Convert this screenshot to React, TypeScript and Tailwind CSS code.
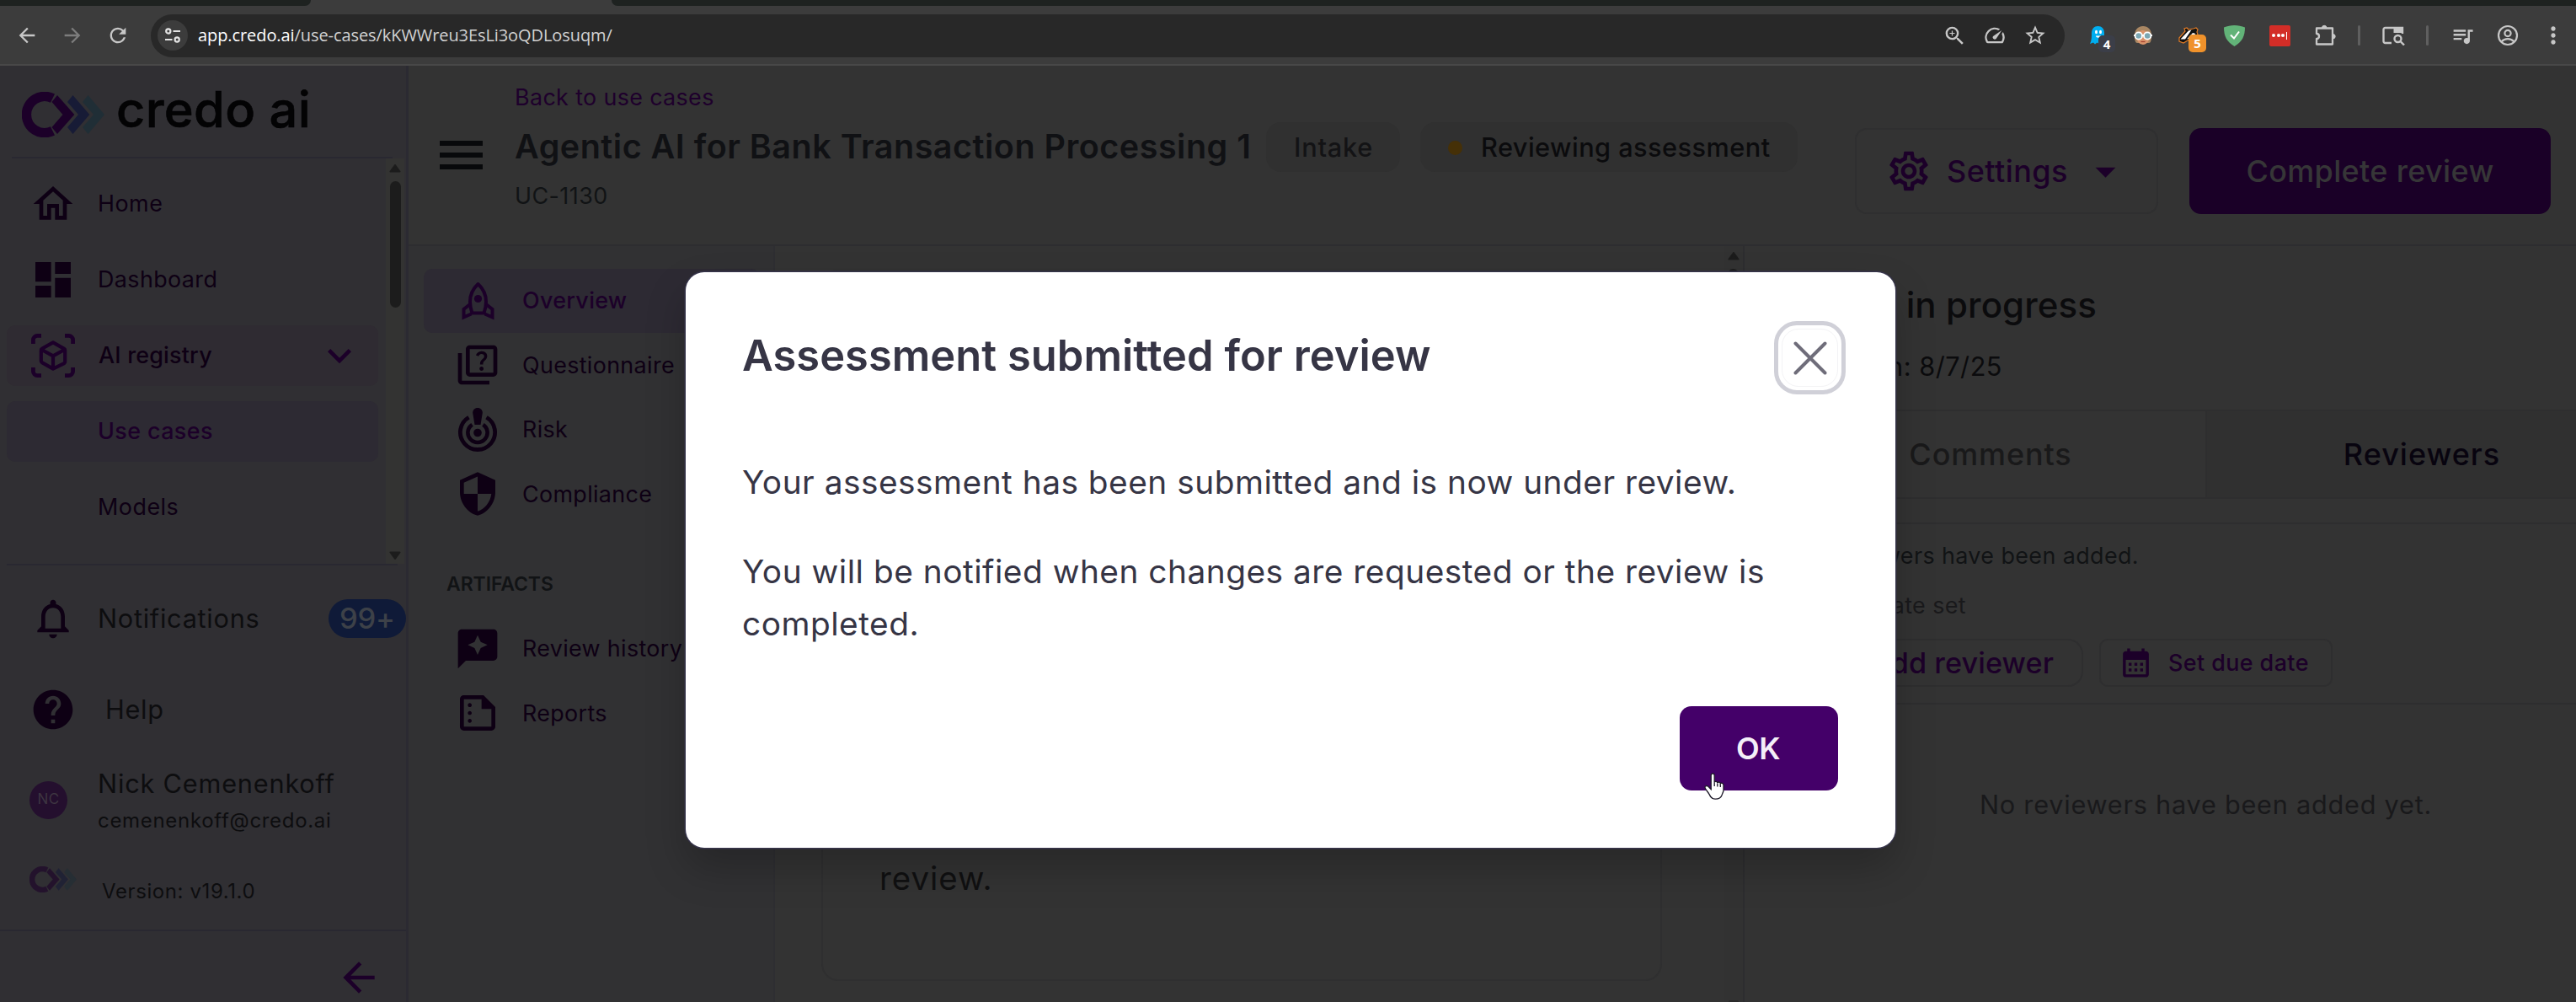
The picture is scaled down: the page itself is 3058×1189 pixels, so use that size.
import type { ReactNode } from "react";
import {
  MdArrowBack,
  MdArrowDropDown,
  MdArrowForward,
  MdCalendarMonth,
  MdDashboard,
  MdExpandMore,
  MdHelp,
  MdMoreVert,
  MdNotificationsNone,
  MdOutlineHome,
  MdOutlineQuiz,
  MdOutlineSettings,
  MdOutlineSummarize,
  MdQueueMusic,
  MdRefresh,
  MdSecurity,
  MdSpeed,
  MdStarBorder,
  MdZoomIn,
} from "react-icons/md";

/* ---------- drawings ---------- */

function CredoMark({ className }: { className: string }) {
  return (
    <svg viewBox="0 0 98 54" className={className}>
      <path d="M36.5 7.6A21.6 21.6 0 1 0 36.5 46.4" fill="none" stroke="#1c0029" strokeWidth="11.4" />
      <path d="M42 4L62.3 27L42 50L35.5 42L48.5 27L35.5 12Z" fill="#1c0029" />
      <path d="M60.5 4L80.3 27L60.5 50L54 42L67 27L54 12Z" fill="#171b36" />
      <path d="M78.5 4L98 27L78.5 50L72 42L85 27L72 12Z" fill="#202e36" />
    </svg>
  );
}

function ScanBox() {
  return (
    <svg viewBox="0 0 26 26" className="size-[52px]" fill="none" stroke="#1c0029">
      <path
        d="M1.2 6V3.7A2.5 2.5 0 0 1 3.7 1.2H6M20 1.2h2.3a2.5 2.5 0 0 1 2.5 2.5V6M24.8 20v2.3a2.5 2.5 0 0 1-2.5 2.5H20M6 24.8H3.7a2.5 2.5 0 0 1-2.5-2.5V20"
        strokeWidth="2.4"
      />
      <path
        d="M13 5.2l6.6 3.7a1 1 0 0 1 .5.9v6.9a1 1 0 0 1-.5.9L13 20.8l-6.6-3.7a1 1 0 0 1-.5-.9V9.8a1 1 0 0 1 .5-.9L13 5.2zM6.3 9.5L13 13.2L19.7 9.5M13 13v7.5"
        strokeWidth="2.1"
        strokeLinejoin="round"
      />
    </svg>
  );
}

function Rocket() {
  return (
    <svg viewBox="0 0 39 46" className="h-[46px] w-[39px]" fill="none" stroke="#1c0029" strokeWidth="4">
      <path d="M19.5 3C13 9 10 17 10 24c0 5 1 9.5 2.5 13.5h14C28 33.5 29 29 29 24c0-7-3-15-9.5-21z" strokeLinejoin="round" />
      <path d="M10 27L2.5 33V42.5L11.5 38.5M29 27L36.5 33V42.5L27.5 38.5" />
      <circle cx="19.5" cy="20.5" r="4.6" fill="#1c0029" stroke="none" />
    </svg>
  );
}

function RiskTarget() {
  return (
    <svg viewBox="0 0 48 54" className="h-[54px] w-[48px]" fill="none" stroke="#0e0014">
      <path d="M13.5 12.2A20.6 20.6 0 1 0 34.5 12.2" strokeWidth="4.8" />
      <path d="M17.5 20.8A11.6 11.6 0 1 0 30.5 20.8" strokeWidth="4.6" />
      <circle cx="24" cy="30.5" r="4.8" fill="#0e0014" stroke="none" />
      <path d="M24 1c3.4 0 6 2.6 5.8 6L27.5 21h-7L18.2 7C18 3.6 20.6 1 24 1z" fill="#0e0014" stroke="none" />
    </svg>
  );
}

function ReviewBubble() {
  return (
    <svg viewBox="0 0 24 24" className="size-[56px]" fill="#0e0014">
      <path
        fillRule="evenodd"
        d="M20 2H4c-1.1 0-2 .9-2 2v18l4-4h14c1.1 0 2-.9 2-2V4c0-1.1-.9-2-2-2zM13.57 11.57L12 15l-1.57-3.43L7 10l3.43-1.57L12 5l1.57 3.43L17 10z"
      />
    </svg>
  );
}

function HandCursor() {
  return (
    <svg viewBox="0 0 25 32" className="h-8 w-[25px]">
      <path
        d="M8.2 3.2c0-3 4-3 4 0v8.3c.4-1.6 3.4-1.4 3.6.6.5-1.4 3.2-1.2 3.5.8.7-1.2 3.4-.9 3.7 1.4v6.5c0 2-1.4 3.8-1.8 5.4-1.6 4.4-5.2 5-7.7 5-4 0-6.4-3-7.4-5.6C4.5 22.5 1.5 20 .9 17.2c0-2.2 3.3-2.2 4.7-.2l2.6 2.6z"
        fill="#fff"
        stroke="#1b1726"
        strokeWidth="1.3"
      />
      <path d="M12.2 11.5v4.5M15.8 12.5v4M19.3 13.5v3.5" stroke="#1b1726" strokeWidth="1.3" />
    </svg>
  );
}

/* ---------- browser chrome ---------- */

function Slot({ children }: { children: ReactNode }) {
  return <div className="relative flex w-[54px] shrink-0 items-center justify-center">{children}</div>;
}

function BrowserChrome() {
  return (
    <div className="h-[78px] border-b-2 border-[#484848] bg-[#3c3c3c] font-['Open_Sans',sans-serif]">
      <div className="flex h-[7px] bg-[#3c3c3c]">
        <div className="w-[369px] rounded-br-[10px] bg-[#1e2220]" />
        <div className="w-[357px]" />
        <div className="grow rounded-bl-[10px] bg-[#1e2220]" />
      </div>
      <div className="flex h-[70px] items-center text-[#c7c7c7]">
        <MdArrowBack className="ml-[18px] size-[28px]" />
        <MdArrowForward className="ml-[26px] size-[28px] text-[#7d7d7d]" />
        <MdRefresh className="ml-[26px] size-[28px]" />
        <div className="ml-[25px] flex h-[51px] w-[2272px] items-center rounded-full bg-[#282828] pr-[11px] pl-[8px]">
          <div className="flex size-[36px] items-center justify-center rounded-full bg-[#3c3c3c]">
            <svg viewBox="0 0 20 20" className="size-5" fill="none" stroke="#e3e3e3" strokeWidth="2.2">
              <circle cx="4.8" cy="5" r="2.6" />
              <path d="M10.5 5H19M1 15h8.5" />
              <circle cx="15.2" cy="15" r="2.6" />
            </svg>
          </div>
          <div className="ml-[12px] text-[20px] tracking-[-0.08px] text-[#d2d2d2]">
            <span className="text-white">app.credo.ai</span>/use-cases/kKWWreu3EsLi3oQDLosuqm/
          </div>
          <div className="ml-auto flex">
            <div className="flex w-12 justify-center"><MdZoomIn className="size-[29px]" /></div>
            <div className="flex w-12 justify-center"><MdSpeed className="size-[28px]" /></div>
            <div className="flex w-12 justify-center"><MdStarBorder className="size-[28px]" /></div>
          </div>
        </div>
        <div className="ml-[12px] flex items-center">
          <Slot>
            <svg viewBox="0 0 18 22" className="h-[22px] w-[18px]">
              <path d="M2 9C2 3 5 0 9.5 0S17 3 17 8v13l-3-1.5-2.5 2-3-2-2.5 2-2-2L0 21c2-4 2-8 2-12z" fill="#00aef0" />
              <ellipse cx="7.5" cy="7" rx="1.5" ry="2.3" fill="#fff" />
              <ellipse cx="12.5" cy="7" rx="1.5" ry="2.3" fill="#fff" />
              <path d="M7 11.5h6c0 3-6 3-6 0z" fill="#fff" />
            </svg>
            <span className="absolute top-[11px] left-[28px] flex h-5 w-5 items-center justify-center rounded-[5px] bg-[#3b3e48] text-[15px] leading-none font-bold text-white">4</span>
          </Slot>
          <Slot>
            <svg viewBox="0 0 24 22" className="h-[22px] w-6">
              <path d="M2 11C2 4 6 0 12 0s10 4 10 11c0 6-1 9-3 9H5c-2 0-3-3-3-9z" fill="#a98763" />
              <path d="M4 11c1-3 5-6 8-6s7 3 8 6c0 7-4 11-8 11S4 18 4 11z" fill="#d9936b" />
              <path d="M1 11h22" stroke="#fff" strokeWidth="2" />
              <circle cx="6.8" cy="11.5" r="4.2" fill="#7ba7b3" stroke="#fff" strokeWidth="1.8" />
              <circle cx="17.2" cy="11.5" r="4.2" fill="#7ba7b3" stroke="#fff" strokeWidth="1.8" />
              <path d="M9.5 18.5h5" stroke="#a33f2e" strokeWidth="1.2" />
            </svg>
          </Slot>
          <Slot>
            <svg viewBox="0 0 25 20" className="h-5 w-[25px]">
              <path d="M1 13L8 5l-1-3 3-1 2 2 6-1 3-1 2 2-1 3 1 3-6 3-6 4-5 3-5-2z" fill="#111" stroke="#e07b26" strokeWidth="1.2" />
              <path d="M2.500 14.500L12 4.500l3.500-1-7.500 11zM10 14.500L17 7l3.500 1-6.500 5z" fill="#fff" />
            </svg>
            <span className="absolute top-[9px] left-[27px] flex h-[21px] w-[21px] items-center justify-center rounded-[5px] bg-[#f0922b] text-[15px] leading-none font-bold text-white">5</span>
          </Slot>
          <Slot>
            <svg viewBox="0 0 25 25" className="size-[25px]">
              <path d="M12.5 0C17 0 21 1 25 2.5c0 10-3 17-12.5 22.500C3 19.500 0 12.500 0 2.500 4 1 8 0 12.500 0z" fill="#62b378" />
              <path d="M8 11.5l4 4 6-8" fill="none" stroke="#fff" strokeWidth="2" />
            </svg>
          </Slot>
          <Slot>
            <div className="flex size-[25px] items-center justify-center gap-[1.5px] rounded-[2px] bg-[#d32d27]">
              <i className="size-1 rounded-full bg-white" />
              <i className="size-1 rounded-full bg-white" />
              <i className="size-1 rounded-full bg-white" />
              <i className="h-[9px] w-px bg-white" />
            </div>
          </Slot>
          <Slot>
            <svg viewBox="0 0 25 26" className="h-[26px] w-[25px]" fill="none" stroke="#c7c7c7" strokeWidth="2.3">
              <path d="M2 4.5h19v19H2v-6.5c4 0 4-6 0-6z" strokeLinejoin="round" />
              <path d="M8.5 4a2.7 2.7 0 0 1 5.4 0zM21.5 11.5a2.7 2.7 0 0 1 0 5.4z" fill="#c7c7c7" strokeWidth="1" />
            </svg>
          </Slot>
        </div>
        <div className="ml-[12px] h-6 w-[3px] rounded-full bg-[#5f5f5f]" />
        <div className="flex w-[78px] justify-center">
          <svg viewBox="0 0 27 23" className="h-[23px] w-[27px]" fill="none" stroke="#c7c7c7" strokeWidth="2.4">
            <path d="M11 20H3.5A2 2 0 0 1 1.5 18V4a2 2 0 0 1 2-2H24v7" />
            <path d="M13.5 1H23a2 2 0 0 1 2 2v5H13.5z" fill="#c7c7c7" stroke="none" />
            <circle cx="18.5" cy="15" r="4" />
            <path d="M21.5 18l4.5 4.5" />
          </svg>
        </div>
        <div className="h-6 w-[3px] rounded-full bg-[#5f5f5f]" />
        <div className="ml-[13px] flex">
          <Slot><MdQueueMusic className="size-[29px]" /></Slot>
          <Slot>
            <svg viewBox="0 0 26 26" className="size-[26px]" fill="none" stroke="#c7c7c7" strokeWidth="2.2">
              <circle cx="13" cy="13" r="11" />
              <circle cx="13" cy="10.5" r="3.6" />
              <path d="M5.5 20.5c4-4.5 11-4.5 15 0" />
            </svg>
          </Slot>
          <Slot><MdMoreVert className="size-[32px]" /></Slot>
        </div>
      </div>
    </div>
  );
}

/* ---------- left sidebar ---------- */

function Arrow({ down }: { down?: boolean }) {
  return (
    <svg viewBox="0 0 14 10" className="h-[10px] w-[14px]" fill="#1c1c1c" stroke="#1c1c1c" strokeWidth="2" strokeLinejoin="round">
      {down ? <path d="M1.5 1.5h11L7 9z" /> : <path d="M1.5 8.5h11L7 1z" />}
    </svg>
  );
}

function Sidebar() {
  return (
    <aside className="flex w-[485px] shrink-0 flex-col border-r-[3px] border-[#2b2a32] bg-[#302f33] text-[#0e0014]">
      <div className="flex h-[108px] items-start pl-[26px]">
        <CredoMark className="mt-[31px] h-[54px] w-[98px]" />
        <span className="ml-[14px] pt-[19px] text-[59.5px] leading-[64px] font-medium tracking-[0.3px] whitespace-nowrap text-[#030304] [-webkit-text-stroke:0.6px_#030304]">
          credo ai
        </span>
      </div>
      <div className="ml-[14px] h-[2px] w-[452px] bg-[#292831]" />
      <div className="flex h-[481px]">
        <nav className="flex w-[458px] flex-col gap-[18px] pt-[18px] pl-[8px] text-[26.9px] tracking-[0.5px]">
          <div className="flex h-[72px] w-[441px] items-center pl-[27px]">
            <MdOutlineHome className="size-[56px]" />
            <span className="ml-[25px] pb-[1px]">Home</span>
          </div>
          <div className="flex h-[72px] w-[441px] items-center pl-[27px]">
            <MdDashboard className="size-[56px]" />
            <span className="ml-[25px] pb-[1px] tracking-[0.4px]">Dashboard</span>
          </div>
          <div className="flex h-[72px] w-[441px] items-center rounded-[10px] bg-[#2f2b32] pl-[29px]">
            <ScanBox />
            <span className="ml-[28px] pb-[1px] font-medium tracking-[0.2px]">AI registry</span>
            <MdExpandMore className="mr-[18px] ml-auto size-[56px] text-[#1c0029]" />
          </div>
          <div className="flex h-[72px] w-[441px] items-center rounded-[10px] bg-[#2d2a33] pl-[108px] font-medium tracking-[0.4px] text-[#1c0029]">
            <span className="pb-[1px]">Use cases</span>
          </div>
          <div className="flex h-[72px] w-[441px] items-center pl-[108px]">
            <span className="pb-[1px]">Models</span>
          </div>
        </nav>
        <div className="flex w-[22px] flex-col items-center bg-[#333332] pt-[7px] pb-[5px]">
          <Arrow />
          <div className="mt-[10px] h-[150px] w-[13px] rounded-full bg-[#1c1c1c]" />
          <div className="mt-auto"><Arrow down /></div>
        </div>
      </div>
      <div className="ml-[8px] h-[2px] w-[464px] bg-[#292831]" />
      <div className="flex h-[126px] items-center pl-[35px]">
        <MdNotificationsNone className="size-[56px]" />
        <span className="ml-[25px] text-[30.7px] tracking-[0.72px] text-[#0d0d0f]">Notifications</span>
        <span className="ml-auto flex h-[46px] w-[92px] shrink-0 items-center justify-center rounded-full bg-[#0f1a38] text-[34.5px] leading-none font-medium tracking-[-0.2px] text-[#3d4148]">
          99+
        </span>
      </div>
      <div className="flex h-[90px] items-center pl-[35px]">
        <MdHelp className="size-[56px]" />
        <span className="ml-[34px] text-[30.7px] tracking-[0.7px] text-[#0d0d0f]">Help</span>
      </div>
      <div className="flex h-[124px] items-center pl-[35px]">
        <div className="flex size-[45px] items-center justify-center rounded-full bg-[#240f2e] text-[17px] tracking-[0.5px] text-[#3d3541]">NC</div>
        <div className="ml-[36px] flex flex-col pt-[4px] text-[#0d0d0f]">
          <span className="h-[45px] text-[30.7px] leading-[45px] tracking-[0.8px]">Nick Cemenenkoff</span>
          <span className="h-[43px] text-[24px] leading-[43px] tracking-[0.69px]">cemenenkoff@credo.ai</span>
        </div>
      </div>
      <div className="flex h-[92px] items-start pl-[35px]">
        <CredoMark className="mt-[17px] h-[31px] w-[56px] opacity-60" />
        <span className="ml-[30px] pt-[32px] text-[24px] leading-[30px] tracking-[0.6px] text-[#0d0d0f]">Version: v19.1.0</span>
      </div>
      <div className="h-[2px] bg-[#292831]" />
      <div className="flex grow items-start justify-end pt-[27px] pr-[28px]">
        <MdArrowBack className="size-[56px] text-[#1c0029]" />
      </div>
    </aside>
  );
}

/* ---------- use-case page ---------- */

function PageHeader() {
  return (
    <header className="flex h-[214px] shrink-0 border-b-2 border-[#2d2d30]">
      <div className="mt-[89px] ml-[37px] flex w-[51px] flex-col gap-[8.5px]">
        <div className="h-[5.5px] bg-[#08090b]" />
        <div className="h-[5.5px] bg-[#08090b]" />
        <div className="h-[5.5px] bg-[#08090b]" />
      </div>
      <div className="ml-[38px] pt-[17px] whitespace-nowrap">
        <div className="h-[40px] text-[26.9px] leading-[40px] tracking-[0.35px] text-[#1e002c]">Back to use cases</div>
        <div className="mt-[10px] flex h-[59px] items-center">
          <h1 className="w-[892px] pt-px text-[39.5px] font-semibold tracking-[0.5px] text-[#101114]">
            Agentic AI for Bank Transaction Processing 1
          </h1>
          <span className="flex h-[59px] w-[159px] items-center rounded-[18px] bg-[#303030] pt-px pl-[33px] text-[30.7px] font-medium tracking-[0.8px] text-[#131315]">
            Intake
          </span>
          <span className="ml-[24px] flex h-[59px] w-[448px] items-center rounded-[18px] bg-[#303030] pt-px pl-[33px] text-[30.7px] font-medium tracking-[0.46px] text-[#0b0b0d]">
            <i className="mr-[22px] size-[17px] rounded-full bg-[#453007]" />
            Reviewing assessment
          </span>
        </div>
        <div className="h-[56px] text-[26.9px] leading-[56px] tracking-[0.45px] text-[#111315]">UC-1130</div>
      </div>
      <div className="mt-[74px] mr-[30px] ml-auto flex h-[102px] gap-[37px] text-[36px] font-medium">
        <button className="flex w-[360px] items-center rounded-[14px] border-2 border-[#2f2f30] pl-[34px] tracking-[0.44px] text-[#1c0029]">
          <MdOutlineSettings className="size-[56px]" />
          <span className="ml-[17px]">Settings</span>
          <MdArrowDropDown className="ml-[16px] size-[57px]" />
        </button>
        <button className="w-[429px] rounded-[14px] bg-[#1a0027] tracking-[0.34px] text-[#363637]">Complete review</button>
      </div>
    </header>
  );
}

function SubNav() {
  const rows: [string, ReactNode][] = [
    ["Questionnaire", <MdOutlineQuiz className="size-[56px]" />],
    ["Risk", <RiskTarget />],
    ["Compliance", <MdSecurity className="size-[56px]" />],
  ];
  const artifacts: [string, ReactNode][] = [
    ["Review history", <ReviewBubble />],
    ["Reports", <MdOutlineSummarize className="size-[56px]" />],
  ];
  const row = ([label, icon]: [string, ReactNode]) => (
    <div key={label} className="flex h-[76.5px] items-center pl-[36px] text-[#0e0014]">
      <div className="flex w-[56px] justify-center">{icon}</div>
      <span className="ml-[25px] pb-px">{label}</span>
    </div>
  );
  return (
    <nav className="w-[435px] shrink-0 border-r-2 border-[#2e2e32] bg-[#313133] pt-[27px] pl-[18px] text-[26.9px] tracking-[0.34px] whitespace-nowrap">
      <div className="flex h-[76px] w-[399px] items-center rounded-[10px] bg-[#2d2a33] pl-[36px] text-[#1c0029]">
        <div className="flex w-[56px] justify-center"><Rocket /></div>
        <span className="ml-[25px] pb-px font-medium tracking-[0.3px]">Overview</span>
      </div>
      {rows.map(row)}
      <div className="h-[107px] pt-[50px] pl-[27px] text-[23px] leading-[36px] font-semibold tracking-[-0.09px] text-[#111315]">ARTIFACTS</div>
      {artifacts.map(row)}
    </nav>
  );
}

function Content() {
  return (
    <section className="flex grow">
      <div className="grow pt-[28px] pl-[55px]">
        <div className="flex h-[844px] w-[998px] flex-col justify-end rounded-[20px] border-2 border-[#2f2f30] pb-[90px] pl-[67px] text-[38.4px] leading-[60px] tracking-[1px] text-[#101011]">
          review.
        </div>
      </div>
      <div className="flex w-[23px] flex-col items-center justify-between bg-[#323232] pt-[7px]">
        <div className="flex flex-col items-center">
          <Arrow />
          <div className="mt-[10px] h-[500px] w-[13px] rounded-full bg-[#1c1c1c]" />
        </div>
        <div className="h-[2px] w-[12px] rounded-t-full bg-[#292929]" />
      </div>
    </section>
  );
}

function ReviewPanel() {
  return (
    <section className="w-[989px] shrink-0 overflow-hidden border-l-2 border-[#2d2d2f] pt-[32px] whitespace-nowrap">
      <div className="flex h-[74px] w-[418px] items-center justify-end text-[42px] font-medium tracking-[0.1px] text-[#0b0b0d]">Review in progress</div>
      <div className="mb-[14px] flex h-[74px] w-[306px] items-center justify-end text-[30.7px] tracking-[0.5px] text-[#0b0b0d]">Began on: 8/7/25</div>
      <div className="flex h-[106px] w-[1057px] border-y-2 border-[#2e2e2f] text-[36px] font-medium">
        <div className="flex w-[549px] items-center justify-center border-r-2 border-[#2e2e2f] pl-[37px] tracking-[0.88px] text-[#19191a]">Comments</div>
        <div className="flex w-[508px] items-center justify-center bg-[#303030] pl-[2px] tracking-[1px] text-[#08040f]">Reviewers</div>
      </div>
      <div className="mt-[28px] border-y-2 border-[#2e2e2f]">
        <div className="flex h-[74px] w-[468px] items-center justify-end text-[26.9px] tracking-[0.4px] text-[#111315]">No reviewers have been added.</div>
        <div className="flex h-[44px] w-[263px] items-center justify-end text-[26.9px] tracking-[0.4px] text-[#19191b]">No due date set</div>
        <div className="mt-[18px] mb-[19px] flex h-[57px] gap-[19px] pl-[33px] text-[#1c0029]">
          <div className="flex w-[369px] items-center justify-end rounded-[18px] border-2 border-[#2e2e2f] pr-[33px] text-[34.2px] font-medium tracking-[0.1px]">Add reviewer</div>
          <div className="flex w-[277px] items-center rounded-[10px] border-2 border-[#2e2e2f] pl-[21px] text-[26.9px] font-medium tracking-[0.42px]">
            <MdCalendarMonth className="size-[41px]" />
            <span className="ml-[18px]">Set due date</span>
          </div>
        </div>
      </div>
      <div className="w-[1095px] text-center text-[30.7px] leading-[237px] tracking-[0.75px] text-[#19191b]">No reviewers have been added yet.</div>
    </section>
  );
}

/* ---------- dialog ---------- */

function SubmittedDialog() {
  return (
    <div className="absolute top-[323px] left-[814px] h-[683px] w-[1436px] rounded-[22px] bg-white text-[#363545] shadow-[0_0_0_1.5px_#36344a,0_24px_48px_rgba(0,0,0,0.22)]">
      <div className="flex items-start justify-between pt-[58px] pr-[59px] pl-[67px]">
        <h2 className="text-[50.6px] leading-[82px] font-semibold tracking-[0.04px]">Assessment submitted for review</h2>
        <div className="flex h-[87px] w-[85px] items-center justify-center rounded-[27px] border-[5px] border-[#d0d0d8]">
          <div className="flex h-[69px] w-[67px] shrink-0 items-center justify-center rounded-[20px] border border-[#f3f3f5]">
            <svg viewBox="0 0 40 40" className="size-10 shrink-0" stroke="#6f6d7a" strokeWidth="4" strokeLinecap="round">
              <path d="M2.5 2.5l35 35M37.5 2.5l-35 35" />
            </svg>
          </div>
        </div>
      </div>
      <div className="mt-[73px] flex flex-col gap-[45px] pl-[67px] text-[38.8px] leading-[61.4px] tracking-[0.51px] whitespace-nowrap">
        <p>Your assessment has been submitted and is now under review.</p>
        <p>
          You will be notified when changes are requested or the review is
          <br />
          completed.
        </p>
      </div>
      <div className="mt-[68px] flex justify-end pr-[68px]">
        <button className="relative h-[100px] w-[188px] rounded-[14px] bg-[#440069] pr-[2px] text-[36px] font-semibold tracking-[-0.5px] text-[#f4eff8]">
          OK
          <span className="absolute top-[79px] left-[29px]"><HandCursor /></span>
        </button>
      </div>
    </div>
  );
}

export default function App() {
  return (
    <div className="relative flex h-[1189px] w-[3058px] flex-col overflow-hidden bg-[#333333] font-['Inter',sans-serif]">
      <BrowserChrome />
      <div className="flex h-[1111px]">
        <Sidebar />
        <main className="flex grow flex-col">
          <PageHeader />
          <div className="flex grow">
            <SubNav />
            <Content />
            <ReviewPanel />
          </div>
        </main>
      </div>
      <SubmittedDialog />
    </div>
  );
}
